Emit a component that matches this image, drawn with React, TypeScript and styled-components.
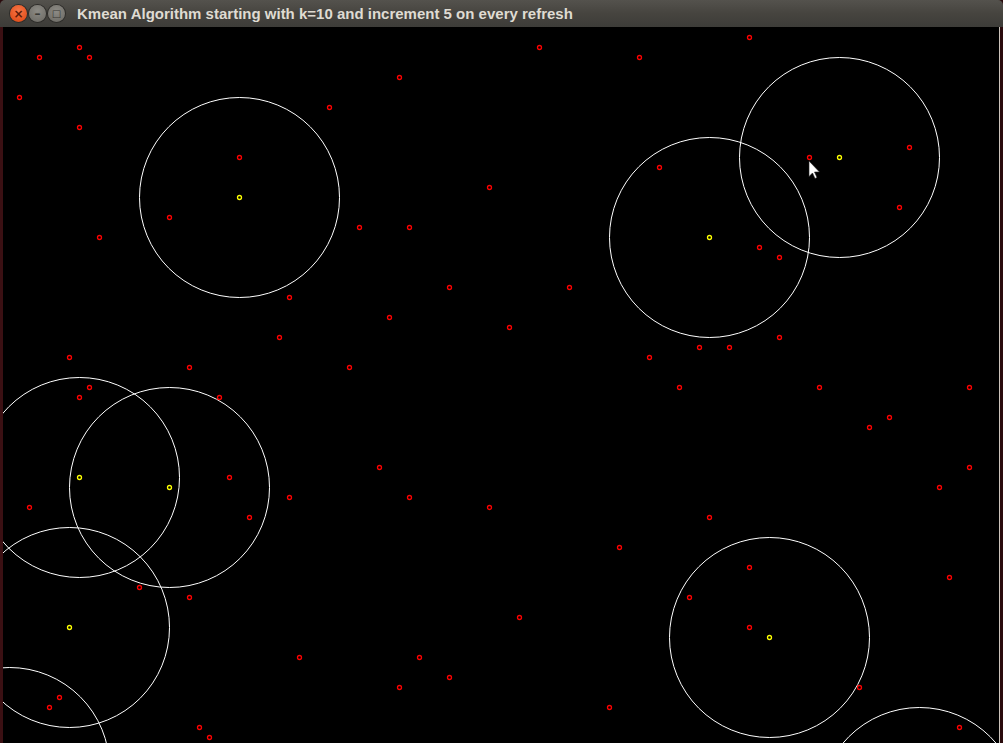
import React from 'react'
import styled, { createGlobalStyle } from 'styled-components'

const points: [number, number][] = [
  [40, 57], [80, 47], [90, 57], [20, 97], [80, 127], [400, 77], [330, 107], [540, 47], [640, 57], [750, 37],
  [240, 157], [170, 217], [100, 237], [360, 227], [410, 227], [490, 187], [290, 297], [450, 287], [570, 287],
  [390, 317], [510, 327], [280, 337], [660, 167], [810, 157], [910, 147], [900, 207], [760, 247], [780, 257],
  [700, 347], [730, 347], [780, 337], [650, 357], [680, 387], [820, 387], [970, 387], [890, 417], [870, 427],
  [70, 357], [190, 367], [350, 367], [90, 387], [80, 397], [220, 397], [380, 467], [230, 477], [970, 467],
  [940, 487], [290, 497], [410, 497], [490, 507], [30, 507], [250, 517], [710, 517], [620, 547], [750, 567],
  [950, 577], [140, 587], [190, 597], [690, 597], [520, 617], [750, 627], [300, 657], [420, 657], [450, 677],
  [400, 687], [860, 687], [60, 697], [50, 707], [610, 707], [960, 727], [200, 727], [210, 737],
]

const centers: [number, number][] = [
  [240, 197], [840, 157], [710, 237], [80, 477], [170, 487], [70, 627], [770, 637],
]

// two clusters whose centres lie off the visible canvas
const clusters: [number, number][] = [...centers, [10, 767], [920, 807]]

export default function App() {
  return (
    <>
      <GlobalStyle />
      <Window>
        <TitleBar>
          <Buttons>
            <WinButton $kind="close">×</WinButton>
            <WinButton $kind="min">–</WinButton>
            <WinButton $kind="max">□</WinButton>
          </Buttons>
          <Title>Kmean Algorithm starting with k=10 and increment 5 on every refresh</Title>
        </TitleBar>
        <Body>
          <LeftEdge />
          <Canvas viewBox="3.5 26.5 996 716" width={996} height={716}>
            {clusters.map(([x, y], i) => (
              <circle key={'c' + i} cx={x} cy={y} r={100} fill="none" stroke="#ffffff" strokeWidth={1} />
            ))}
            {points.map(([x, y], i) => (
              <circle key={'p' + i} cx={x} cy={y} r={2} fill="none" stroke="#ff0000" strokeWidth={1.3} />
            ))}
            {centers.map(([x, y], i) => (
              <circle key={'y' + i} cx={x} cy={y} r={2} fill="none" stroke="#ffff00" strokeWidth={1.3} />
            ))}
            <path
              d="M809.5 160.5 L809.5 176 L813 172.5 L815.5 178 L817.5 177 L815 171.5 L820 171.5 Z"
              fill="#ffffff"
              stroke="#222"
              strokeWidth={0.6}
            />
          </Canvas>
          <RightEdge />
        </Body>
      </Window>
    </>
  )
}

const GlobalStyle = createGlobalStyle`
  html, body {
    margin: 0;
    padding: 0;
    background: #2a0b0d;
    overflow: hidden;
  }
`

const Window = styled.div`
  width: 1003px;
  height: 743px;
  display: flex;
  flex-direction: column;
  background: #2a0b0d;
`

const TitleBar = styled.div`
  height: 27px;
  display: flex;
  align-items: center;
  padding-left: 10px;
  border-radius: 5px 5px 0 0;
  background: linear-gradient(180deg, #54524d 0%, #46443f 50%, #3d3c38 100%);
`

const Buttons = styled.div`
  display: flex;
  align-items: center;
  gap: 2px;
`

const WinButton = styled.div<{ $kind: 'close' | 'min' | 'max' }>`
  width: 17px;
  height: 17px;
  border-radius: 50%;
  display: flex;
  align-items: center;
  justify-content: center;
  font-family: 'DejaVu Sans', sans-serif;
  font-size: ${p => (p.$kind === 'max' ? '10px' : '12px')};
  font-weight: 700;
  line-height: 1;
  color: ${p => (p.$kind === 'close' ? '#5a1a08' : '#3a3935')};
  background: ${p =>
    p.$kind === 'close'
      ? 'radial-gradient(circle at 50% 35%, #f7784a 0%, #e4521f 70%, #c2410f 100%)'
      : 'radial-gradient(circle at 50% 35%, #8d8b85 0%, #74726c 70%, #5f5d58 100%)'};
  box-shadow: 0 0 0 1px #2e2d2a;
`

const Title = styled.div`
  margin-left: 12px;
  font-family: 'Liberation Sans', Arial, sans-serif;
  font-weight: 700;
  font-size: 15px;
  color: #dfdbd2;
  white-space: nowrap;
`

const Body = styled.div`
  flex: 1;
  display: flex;
  overflow: hidden;
`

const LeftEdge = styled.div`
  width: 4px;
  background: #3b1013;
`

const Canvas = styled.svg`
  display: block;
  background: #000000;
  flex: none;
`

const RightEdge = styled.div`
  width: 3px;
  border-left: 1px solid #cbc3bb;
  background: #2a0b0d;
`
